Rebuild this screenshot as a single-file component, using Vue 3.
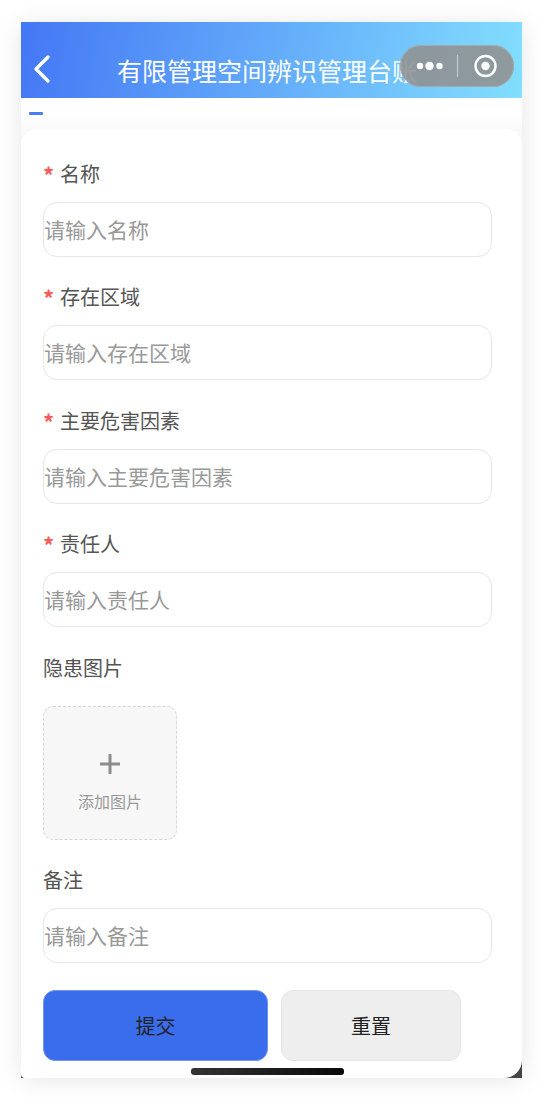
<script setup>
const fields = [
  { label: '名称', placeholder: '请输入名称', required: true },
  { label: '存在区域', placeholder: '请输入存在区域', required: true },
  { label: '主要危害因素', placeholder: '请输入主要危害因素', required: true },
  { label: '责任人', placeholder: '请输入责任人', required: true },
]
</script>

<template>
  <div class="page">
    <div class="device">
      <header class="nav">
        <svg class="back" width="20" height="30" viewBox="0 0 20 30" fill="none">
          <path d="M16 3 L4 15 L16 27" stroke="#fff" stroke-width="3.4" stroke-linecap="round" stroke-linejoin="round" />
        </svg>
        <h1 class="title">有限管理空间辨识管理台账</h1>
        <div class="capsule">
          <svg width="114" height="42" viewBox="0 0 114 42" fill="none">
            <circle cx="20" cy="21" r="3.2" fill="#fff" />
            <circle cx="29.5" cy="21" r="4.2" fill="#fff" />
            <circle cx="39.5" cy="21" r="3.2" fill="#fff" />
            <path d="M57.5 10 V32" stroke="#c4c9cc" stroke-width="1.2" />
            <circle cx="85.5" cy="21" r="10" stroke="#fff" stroke-width="2.4" />
            <circle cx="85.5" cy="21" r="4.2" fill="#fff" />
          </svg>
        </div>
      </header>
      <div class="tabs"><span class="tab-mark"></span></div>
      <main class="card">
        <div v-for="f in fields" :key="f.label" class="field">
          <div class="label"><span class="star">*</span>{{ f.label }}</div>
          <div class="input">{{ f.placeholder }}</div>
        </div>
        <div class="field upload-field">
          <div class="label">隐患图片</div>
          <div class="upload">
            <svg width="22" height="22" viewBox="0 0 22 22"><path d="M11 1 V21 M1 11 H21" stroke="#8c8c8c" stroke-width="3" /></svg>
            <span class="upload-text">添加图片</span>
          </div>
        </div>
        <div class="field">
          <div class="label">备注</div>
          <div class="input">请输入备注</div>
        </div>
        <div class="actions">
          <button class="btn primary">提交</button>
          <button class="btn ghost">重置</button>
        </div>
        <div class="home"></div>
      </main>
    </div>
  </div>
</template>

<style>
html, body { margin: 0; background: #fff; }
</style>

<style scoped>
.page {
  width: 543px;
  height: 1099px;
  box-sizing: border-box;
  padding: 22px 21px 21px;
  font-family: "Noto Sans CJK SC", "Noto Sans", sans-serif;
}
.device {
  width: 501px;
  height: 1056px;
  display: flex;
  flex-direction: column;
  background: linear-gradient(#f9f9f9 0 90%, #454545 90% 100%);
  box-shadow: 0 2px 24px rgba(0, 0, 0, 0.1);
  position: relative;
  overflow: hidden;
}
.nav {
  height: 76px;
  flex: none;
  display: flex;
  align-items: center;
  position: relative;
  background: linear-gradient(100deg, #4477f5 0%, #82dffe 100%);
  color: #fff;
}
.back { margin: 18px 0 0 11px; flex: none; }
.title {
  margin: 19px 0 0 65px;
  font-size: 25px;
  font-weight: 400;
  line-height: 36px;
  white-space: nowrap;
}
.capsule {
  position: absolute;
  left: 379px;
  top: 23px;
  width: 114px;
  height: 42px;
  border-radius: 21px;
  background: rgba(145, 145, 145, 0.88);
  box-shadow: inset 0 0 0 1px rgba(170, 170, 170, 0.9);
}
.capsule svg { display: block; }
.tabs {
  height: 31px;
  flex: none;
  background: linear-gradient(#fff 50%, #fafafa);
  box-sizing: border-box;
  padding: 14px 0 0 8px;
}
.tab-mark {
  display: block;
  width: 14px;
  height: 3px;
  background: #4a7bf3;
  border-radius: 1px;
}
.card {
  flex: 1;
  background: #fff;
  border-radius: 16px 16px 18px 4px;
  padding: 29.7px 30px 0 22px;
  box-sizing: border-box;
  position: relative;
}
.field { margin-bottom: 25.6px; }
.label {
  font-size: 20px;
  line-height: 30px;
  color: #555;
  height: 30px;
}
.star {
  color: #f65a5a;
  display: inline-block;
  width: 17px;
  font-size: 22px;
  font-weight: 700;
  line-height: 30px;
  vertical-align: top;
}
.input {
  margin-top: 13px;
  height: 55px;
  box-sizing: border-box;
  border: 1px solid #e6e6e6;
  border-radius: 14px;
  font-size: 21px;
  line-height: 52px;
  color: #999;
}
.upload-field { margin-bottom: 25px; }
.upload {
  margin-top: 23.3px;
  width: 134px;
  height: 134px;
  box-sizing: border-box;
  border: 1px dashed #d6d6d6;
  border-radius: 10px;
  background: #f7f7f7;
  display: flex;
  flex-direction: column;
  align-items: center;
  padding-top: 45.5px;
}
.upload-text {
  margin-top: 14.5px;
  font-size: 16px;
  line-height: 24px;
  color: #999;
}
.actions { display: flex; gap: 13px; padding-top: 1px; }
.btn {
  height: 71px;
  border-radius: 12px;
  font-family: inherit;
  font-size: 20px;
  color: #222;
  padding: 0;
}
.primary { width: 225px; background: #3a6deb; border: 1px solid #6f95f0; }
.ghost { width: 180px; background: #eee; border: 1px solid #e6e6e6; }
.home {
  position: absolute;
  left: 170px;
  top: 939px;
  width: 153px;
  height: 7px;
  border-radius: 3px;
  background: linear-gradient(90deg, #333, #0a0a0a);
}
</style>
